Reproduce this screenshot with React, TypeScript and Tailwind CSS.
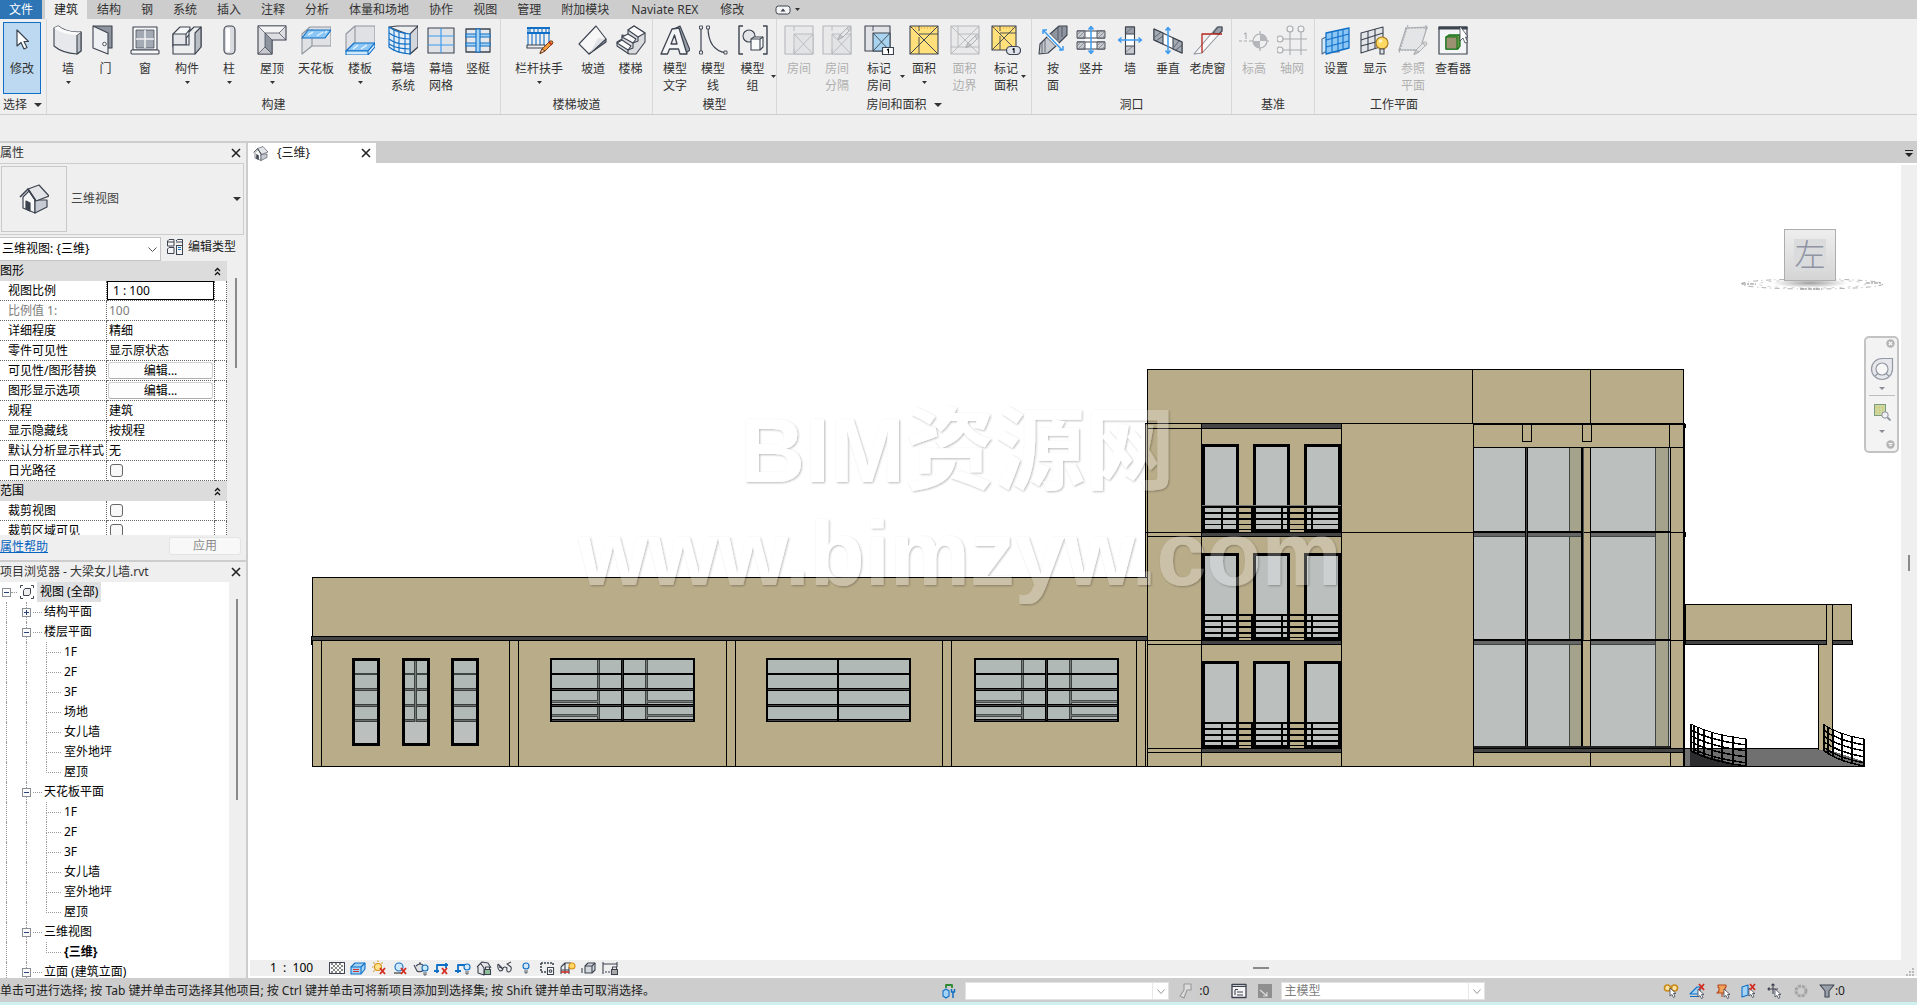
import React from "react";

const INK = "#3d4450";
const BLUE = "#0f6fc6";
const SKY = "#3d9bee";

/* ---------- icon helpers ---------- */

function Ico({ children, size = 30 }: { children: React.ReactNode; size?: number }) {
  return (
    <svg
      width={size}
      height={size}
      viewBox={size === 30 ? "0 0 30 30" : "0 0 16 16"}
      fill="none"
      stroke={INK}
      strokeWidth="1.1"
      strokeLinejoin="round"
      className="block shrink-0"
      aria-hidden
    >
      {children}
    </svg>
  );
}

function Pencil({ gray = false, x = 0, y = 0 }: { gray?: boolean; x?: number; y?: number }) {
  return (
    <g transform={`translate(${x} ${y})`} strokeWidth="0.9" stroke={gray ? "#a8abb0" : "#6d3413"}>
      <path d="M1 13L3 9L11 1Q14 0 14 3L6 11L1 13.500Z" fill={gray ? "#e6e6e6" : "#f39a3a"} />
      <path d="M1 13.500L3 9L6 11Z" fill={gray ? "#ccc" : "#f8e2bd"} />
      <path d="M10 2L13 5" stroke={gray ? "#bbb" : "#b8251b"} strokeWidth="1.600" />
    </g>
  );
}

function RoomBase({ c, fill, sq }: { c: string; fill: string; sq: string }) {
  return (
    <>
      <rect x="1" y="1" width="28" height="28" fill={fill} stroke={c} />
      <path d="M10 9H29V29H10Z" fill={sq} stroke={c} strokeWidth="0.9" />
      <path d="M10 9L29 29M29 9L10 29M10 1V6M10 24V29" stroke={c} strokeWidth="0.9" />
    </>
  );
}

function Hatch({ x, y }: { x: number; y: number }) {
  return (
    <g>
      <rect x={x} y={y} width="8" height="7" fill="#c6c9ce" stroke={INK} strokeWidth="0.9" />
      <path d={`M${x} ${y + 4}l4-4M${x + 1} ${y + 7}l7-7M${x + 5} ${y + 7}l3-3`} stroke="#777c85" strokeWidth="0.700" />
    </g>
  );
}

const icons: Record<string, React.ReactNode> = {
  cursor: <path d="M10 5V21L14 17.500L17 24L20 22.500L17 16.500H21.500Z" fill="#fff" strokeWidth="1.200" />,
  wall: (
    <>
      <path d="M1 3L5 1Q14 8 28 7V26L24 29Q9 28 1 21Z" fill="#e6e8eb" />
      <path d="M24 10L28 7V26L24 29Z" fill="#b9bdc4" />
      <path d="M1 3L5 1Q14 8 28 7L24 10Q10 10 1 3Z" fill="#fafafa" stroke="none" />
    </>
  ),
  door: (
    <>
      <path d="M2 1H21V23H17" fill="#8f959e" />
      <path d="M2 1L17 8V29L2 23Z" fill="#eef0f2" />
      <circle cx="13.500" cy="19" r="1.800" fill="#fff" strokeWidth="0.9" />
    </>
  ),
  window: (
    <>
      <rect x="3" y="2" width="24" height="23" fill="#f7f7f8" />
      <rect x="6" y="5" width="18" height="18" fill="#a4aab3" strokeWidth="0.700" />
      <path d="M15 5V23M6 14H24" stroke="#eef0f2" strokeWidth="1.600" />
      <rect x="1" y="25" width="28" height="4" rx="1" fill="#f7f7f8" />
    </>
  ),
  component: (
    <>
      <path d="M1 9L8 2H18V9L14 13V20H5L1 22Z" fill="#f5f6f7" />
      <path d="M1 9H14V20H1Z" fill="#e3e5e9" />
      <path d="M14 9L18 4M1 20V29H23L29 22V2H22L17 7V20H1" fill="#eceef0" />
      <path d="M23 29V8L29 2V22Z" fill="#b9bdc4" />
    </>
  ),
  column: (
    <>
      <rect x="10" y="1" width="11" height="28" rx="4" fill="#d9dbdf" />
      <rect x="12" y="3" width="4" height="24" rx="2" fill="#fff" stroke="none" />
    </>
  ),
  roof: (
    <>
      <path d="M1 1H29V15H15V29H1Z" fill="#dcdee2" />
      <path d="M1 1L8 8H22L29 1Z" fill="#f5f5f6" strokeWidth="0.700" />
      <path d="M8 8V22L15 29V15L8 8Z" fill="#8f959e" strokeWidth="0.700" />
      <path d="M1 29L8 22L15 29Z" fill="#c6c9ce" strokeWidth="0.700" />
      <path d="M22 8L29 15" strokeWidth="0.700" />
    </>
  ),
  ceiling: (
    <>
      <path d="M1 9L9 2H30V21H11L1 29Z" fill="#dfe1e4" stroke="#8f959e" />
      <path d="M11 4V21" stroke="#8f959e" />
      <path d="M1 13L7 5H30L24 13Z" fill="#8cc6f5" stroke={BLUE} />
      <path d="M7 10L12 7M16 11L22 7M24 8L26 6" stroke="#d9effd" strokeWidth="1.500" />
    </>
  ),
  floor: (
    <>
      <path d="M1 9L10 1H30V19L10 19L1 26Z" fill="#dfe1e4" stroke="#8f959e" />
      <path d="M10 1V19" stroke="#8f959e" />
      <path d="M1 26L9 18H30L23 26Z" fill="#8cc6f5" stroke={BLUE} />
      <path d="M1 26H23V30H1ZM23 26L30 18V22L23 30Z" fill="#cfe8fb" stroke={BLUE} />
      <path d="M8 24L13 20M16 24L22 20" stroke="#e6f5ff" strokeWidth="1.500" />
    </>
  ),
  curtainSystem: (
    <>
      <path d="M1 2L9 1H30V22L22 29Q22 29 22 10Z" fill="#eceef0" />
      <path d="M30 1L22 9V29L30 22Z" fill="#d3d6db" />
      <path d="M1 2Q9 8 22 9V29Q8 28 1 22Z" fill="#e4edf5" stroke={BLUE} strokeWidth="1.200" />
      <path d="M1 8Q9 14 22 14M1 14Q9 20 22 19M1 19Q9 24 22 24M6 5V26M11 7V28M17 8V29" stroke={BLUE} strokeWidth="1.100" />
    </>
  ),
  curtainGrid: (
    <>
      <rect x="2" y="3" width="26" height="25" fill="#e0e2e6" />
      <path d="M15 3V28M2 11H28M2 20H28" stroke={SKY} strokeWidth="1.200" />
    </>
  ),
  mullion: (
    <>
      <rect x="3" y="4" width="24" height="23" fill="#e6e8eb" strokeWidth="1.300" />
      <path d="M3 9H27V12H3ZM3 18H27V21H3Z" fill="#a5d3f5" stroke={BLUE} />
      <path d="M13 4H17V27H13Z" fill="#a5d3f5" stroke={BLUE} />
    </>
  ),
  railing: (
    <>
      <path d="M3 3H26M3 8H26" stroke={BLUE} strokeWidth="2.200" />
      <path d="M4 3V21M8 9V21M12 9V21M16 9V21M20 9V21M25 3V17M6 4V7M10 4V7M14 4V7M18 4V7M22 4V7" stroke={BLUE} />
      <rect x="3" y="20" width="18" height="3" fill="#eee" />
      <Pencil x={15} y={15} />
    </>
  ),
  ramp: (
    <>
      <path d="M1 19L18 1L28 14L11 29Z" fill="#f7f7f8" />
      <path d="M11 29L28 14V17L11 29Z" fill="#8f959e" />
      <path d="M20 13L27 14L12 28Z" fill="#dfe1e4" stroke="none" />
    </>
  ),
  stair: (
    <>
      <path d="M12 5L18 1L29 8V17L20 29L13 29L1 21V17L6 14V10L12 11Z" fill="#d9dbdf" />
      <path d="M12 5L18 1L29 8L22 12Z" fill="#fafafa" />
      <path d="M6 12L12 9L20 14L17 18ZM1 18L6 15L15 21L12 25Z" fill="#fafafa" />
      <path d="M22 12V16L17 18V23L12 25V29" />
    </>
  ),
  modelText: (
    <>
      <path d="M14 4L20 1L30 25L24 29Z" fill="#9aa0a9" />
      <path d="M1 29L12 4L19 3L27 29H20L18.500 24H9.500L7.500 29ZM11 19H17L14.500 10Z" fill="#f4f5f6" fillRule="evenodd" strokeWidth="1.300" />
    </>
  ),
  modelLine: (
    <>
      <path d="M3 2V28M10 2Q10 25 28 28" strokeWidth="1.200" />
      <g fill="#eee" strokeWidth="0.900">
        <rect x="1.500" y="1" width="3" height="3" />
        <rect x="1.500" y="26" width="3" height="3" />
        <rect x="8.500" y="1" width="3" height="3" />
        <rect x="26" y="26" width="3" height="3" />
      </g>
    </>
  ),
  modelGroup: (
    <>
      <path d="M5 1H1V29H5M25 1H29V29H25" strokeWidth="1.400" />
      <circle cx="11" cy="11" r="6" fill="#e3e5e9" />
      <path d="M13 14L16 12H25V22L22 25H13Z" fill="#fafafa" />
      <path d="M13 14H22V25M22 14L25 12" />
    </>
  ),
  room: <RoomBase c="#b4b7bb" fill="#e9e9ea" sq="#e2e3e4" />,
  roomSep: (
    <>
      <RoomBase c="#b4b7bb" fill="#e9e9ea" sq="#e2e3e4" />
      <Pencil gray x={15} y={1} />
    </>
  ),
  tagRoom: (
    <>
      <path d="M1 1H26V26H1Z" fill="#e0e2e6" />
      <path d="M9 8H26V26H9Z" fill="#a9d4ef" />
      <path d="M9 8L26 26M26 8L9 26M9 1V6" strokeWidth="0.900" />
      <rect x="18.500" y="22.500" width="11" height="7" fill="#fff" strokeWidth="1.200" />
      <path d="M23 25L24.500 24V28.500" stroke="#000" />
    </>
  ),
  area: (
    <>
      <rect x="1" y="1" width="28" height="28" fill="#ffe07a" />
      <path d="M1 1L29 29M29 1L1 29" strokeWidth="1" />
      <path d="M10 1V6M10 12V29M10 9H29" strokeWidth="0.900" />
      <path d="M3 3H27" stroke="#e59a2a" strokeDasharray="1 2" />
    </>
  ),
  areaBoundary: (
    <>
      <rect x="1" y="1" width="28" height="28" fill="#e9e9ea" stroke="#b4b7bb" />
      <path d="M1 1L29 29M29 1L1 29M8 1V22M1 22H29M8 9H29" stroke="#b4b7bb" strokeWidth="0.900" />
      <Pencil gray x={15} y={9} />
    </>
  ),
  tagArea: (
    <>
      <rect x="1" y="1" width="24" height="24" fill="#ffe07a" />
      <path d="M1 1L25 25M25 1L1 25M9 1V6M9 11V25M9 8H25" strokeWidth="0.900" />
      <path d="M3 3H23" stroke="#e59a2a" strokeDasharray="1 2" />
      <rect x="15.500" y="21.500" width="14" height="8" rx="4" fill="#dfe3ec" strokeWidth="1.200" />
      <path d="M21.500 24.500L23 23.500V28" stroke="#000" />
    </>
  ),
  byFace: (
    <>
      <path d="M2 19L9 12L18 21L10 28L1 29Z" fill="#c6c9ce" />
      <path d="M12 9L21 1H29V10L21 18Z" fill="#8f959e" />
      <path d="M9 12L12 9L21 18L18 21Z" fill="#fff" stroke="none" />
      <path d="M4 17V28M7 15V27M20 2V15M24 2V12" strokeWidth="0.700" />
      <path d="M6 6L24 25M5 9V5H9M21 25H25V21" stroke={SKY} strokeWidth="1.500" />
    </>
  ),
  shaft: (
    <>
      <rect x="9" y="6" width="12" height="18" fill="#fff" stroke="none" />
      <path d="M1 6H29M1 13H29M1 17H29M1 24H29" />
      <Hatch x={1} y={6} />
      <Hatch x={21} y={6} />
      <Hatch x={1} y={17} />
      <Hatch x={21} y={17} />
      <path d="M15 2V28M12.500 4.500L15 1.500L17.500 4.500M12.500 25.500L15 28.500L17.500 25.500" stroke={SKY} strokeWidth="1.500" />
    </>
  ),
  wallOpening: (
    <>
      <rect x="10.500" y="2" width="9" height="27" fill="#fff" />
      <rect x="10.500" y="2" width="9" height="7" fill="#9aa0a9" />
      <rect x="10.500" y="21" width="9" height="8" fill="#c6c9ce" />
      <path d="M11 27L18 21M11 8L18 2" stroke="#666b75" strokeWidth="0.700" />
      <path d="M4 15H26M6.500 12.500L3.500 15L6.500 17.500M23.500 12.500L26.500 15L23.500 17.500" stroke={SKY} strokeWidth="1.500" />
    </>
  ),
  vertical: (
    <>
      <path d="M1 4L29 17V28L1 15Z" fill="#fff" />
      <path d="M1 4L10 8V19L1 15ZM20 13L29 17V28L20 24Z" fill="#a4aab3" />
      <path d="M2 12L8 7M3 16L10 11M21 22L26 16M23 25L29 20" strokeWidth="0.700" />
      <path d="M15 3V28M12.500 5.500L15 2.500L17.500 5.500M12.500 25.500L15 28.500L17.500 25.500" stroke={SKY} strokeWidth="1.500" />
    </>
  ),
  dormer: (
    <>
      <path d="M1 29L24 2H29V6L9 28Z" fill="#fafafa" stroke="#8f959e" />
      <path d="M20 8L25 2H29V6L26 9Z" fill="#9aa0a9" />
      <path d="M9 28V9H29" stroke="#b5251b" strokeWidth="1.300" />
    </>
  ),
  level: (
    <g stroke="#a8abb0">
      <path d="M0 16H3M5 16H8M10 16H30M21 6V26" />
      <circle cx="21" cy="16" r="7" fill="#efefef" />
      <path d="M21 9A7 7 0 0 1 28 16H21ZM21 16V23A7 7 0 0 1 14 16Z" fill="#b4b6ba" stroke="none" />
      <path d="M5 9L7 8V14" />
    </g>
  ),
  gridLines: (
    <g stroke="#a8abb0">
      <path d="M13 6V30M24 6V30M6 14H30M6 25H30" />
      <g fill="#f4f4f4">
        <circle cx="13" cy="4" r="3" />
        <circle cx="24" cy="4" r="3" />
        <circle cx="3" cy="14" r="3" />
        <circle cx="3" cy="25" r="3" />
      </g>
    </g>
  ),
  setPlane: (
    <>
      <path d="M1 14L5 12H18V27H4L1 29Z" fill="#cfe8fb" stroke="#5a6e86" />
      <path d="M5 8L28 3V23L5 29Z" fill="#8cc6f5" stroke={BLUE} strokeWidth="1.300" />
      <path d="M11 7V27M17 6V26M22 5V24M5 15L28 9M5 22L28 16" stroke={BLUE} />
    </>
  ),
  showPlane: (
    <>
      <path d="M1 8L23 2V21L1 28Z" fill="#e3e5e9" />
      <path d="M8 6V26M15 4V23M1 15L23 8M1 21L23 15" />
      <circle cx="22" cy="18" r="6" fill="#ffd964" stroke="#a8791c" />
      <circle cx="20.500" cy="16" r="1.800" fill="#fff6cf" stroke="none" />
      <path d="M20 24H24V29H20Z" fill="#dfe1e4" />
    </>
  ),
  refPlane: (
    <g stroke="#a8abb0">
      <path d="M8 3L29 2L22 25H1Z" fill="#e4e5e6" />
      <path d="M10 0L1 28M0 25H22M7 3H30M28 0V6" strokeDasharray="2 1" />
      <Pencil gray x={15} y={16} />
    </g>
  ),
  viewer: (
    <>
      <rect x="1" y="2" width="28" height="27" fill="#f4f5f6" strokeWidth="1.200" />
      <path d="M1 2H29V4H1Z" fill={INK} />
      <path d="M8 12L11 10H22V21L20 24H8Z" fill="#6a9a48" stroke="#17751a" strokeWidth="1.300" />
      <path d="M8 12H19V24H8Z" fill="#9c9272" stroke="#17751a" />
      <path d="M22 1V16L25 13L27 18L29.500 17L27.500 12H30Z" fill="#fff" strokeWidth="0.800" />
    </>
  ),
};

/* ---------- ribbon ---------- */

type Tool = { icon: string; lines: string[]; w: string; arrow?: "below" | "side"; off?: boolean };
type Group = { title: string; arrow?: boolean; tools: Tool[]; pad?: string };

const groups: Group[] = [
  {
    title: "构建",
    tools: [
      { icon: "wall", lines: ["墙"], w: "w-[42px]", arrow: "below" },
      { icon: "door", lines: ["门"], w: "w-[33px]" },
      { icon: "window", lines: ["窗"], w: "w-[46px]" },
      { icon: "component", lines: ["构件"], w: "w-[38px]", arrow: "below" },
      { icon: "column", lines: ["柱"], w: "w-[46px]", arrow: "below" },
      { icon: "roof", lines: ["屋顶"], w: "w-[40px]", arrow: "below" },
      { icon: "ceiling", lines: ["天花板"], w: "w-[48px]" },
      { icon: "floor", lines: ["楼板"], w: "w-[40px]", arrow: "below" },
      { icon: "curtainSystem", lines: ["幕墙", "系统"], w: "w-[46px]" },
      { icon: "curtainGrid", lines: ["幕墙", "网格"], w: "w-[30px]" },
      { icon: "mullion", lines: ["竖梃"], w: "w-[44px]" },
    ],
  },
  {
    title: "楼梯坡道",
    tools: [
      { icon: "railing", lines: ["栏杆扶手"], w: "w-[76px]", arrow: "below" },
      { icon: "ramp", lines: ["坡道"], w: "w-[32px]" },
      { icon: "stair", lines: ["楼梯"], w: "w-[43px]" },
    ],
  },
  {
    title: "模型",
    tools: [
      { icon: "modelText", lines: ["模型", "文字"], w: "w-[44px]" },
      { icon: "modelLine", lines: ["模型", "线"], w: "w-[32px]" },
      { icon: "modelGroup", lines: ["模型", "组"], w: "w-[47px]", arrow: "side" },
    ],
  },
  {
    title: "房间和面积",
    arrow: true,
    pad: "pr-[5px]",
    tools: [
      { icon: "room", lines: ["房间"], w: "w-[44px]", off: true },
      { icon: "roomSep", lines: ["房间", "分隔"], w: "w-[32px]", off: true },
      { icon: "tagRoom", lines: ["标记", "房间"], w: "w-[52px]", arrow: "side" },
      { icon: "area", lines: ["面积"], w: "w-[38px]", arrow: "below" },
      { icon: "areaBoundary", lines: ["面积", "边界"], w: "w-[43px]", off: true },
      { icon: "tagArea", lines: ["标记", "面积"], w: "w-[40px]", arrow: "side" },
    ],
  },
  {
    title: "洞口",
    tools: [
      { icon: "byFace", lines: ["按", "面"], w: "w-[42px]" },
      { icon: "shaft", lines: ["竖井"], w: "w-[34px]" },
      { icon: "wallOpening", lines: ["墙"], w: "w-[44px]" },
      { icon: "vertical", lines: ["垂直"], w: "w-[32px]" },
      { icon: "dormer", lines: ["老虎窗"], w: "w-[47px]" },
    ],
  },
  {
    title: "基准",
    pad: "pr-[6px]",
    tools: [
      { icon: "level", lines: ["标高"], w: "w-[44px]", off: true },
      { icon: "gridLines", lines: ["轴网"], w: "w-[32px]", off: true },
    ],
  },
  {
    title: "工作平面",
    tools: [
      { icon: "setPlane", lines: ["设置"], w: "w-[42px]" },
      { icon: "showPlane", lines: ["显示"], w: "w-[36px]" },
      { icon: "refPlane", lines: ["参照", "平面"], w: "w-[40px]", off: true },
      { icon: "viewer", lines: ["查看器"], w: "w-[40px]" },
    ],
  },
];

const tabs = ["结构", "钢", "系统", "插入", "注释", "分析", "体量和场地", "协作", "视图", "管理", "附加模块", "Naviate REX", "修改"];

function Down({ big = false }: { big?: boolean }) {
  return (
    <svg width={big ? 8 : 5} height={big ? 4 : 3} viewBox="0 0 8 4" preserveAspectRatio="none" className="block shrink-0" aria-hidden>
      <path d="M0 0H8L4 4Z" fill="#333" />
    </svg>
  );
}

function ToolButton({ t }: { t: Tool }) {
  return (
    <button
      disabled={t.off}
      className={`${t.w} relative flex shrink-0 flex-col items-center pt-[6px] leading-[17px] whitespace-nowrap ${t.off ? "text-[#b0b0b0]" : "text-[#333]"}`}
    >
      <Ico>{icons[t.icon]}</Ico>
      <span className="mt-[5px]">{t.lines[0]}</span>
      {t.lines[1] && <span>{t.lines[1]}</span>}
      {t.arrow === "below" && (
        <span className="mt-1">
          <Down />
        </span>
      )}
      {t.arrow === "side" && (
        <span className="absolute right-0 top-[56px]">
          <Down />
        </span>
      )}
    </button>
  );
}

function Ribbon() {
  return (
    <header className="shrink-0">
      <nav className="flex h-[19px] items-stretch bg-[#cdcdcd] leading-[19px] text-[#333]">
        <button className="w-[42px] bg-[#2e75b6] text-white">文件</button>
        <button className="ml-[3px] w-[42px] bg-[#efefef] text-[#222]">建筑</button>
        {tabs.map((t) => (
          <button key={t} className={t.length > 6 ? "px-3 whitespace-nowrap" : "px-[10px] whitespace-nowrap"}>
            {t}
          </button>
        ))}
        <button className="ml-[21px] flex items-center gap-1" aria-label="最小化功能区">
          <svg width="16" height="10" viewBox="0 0 16 10" aria-hidden>
            <rect x="1" y="1" width="14" height="8" rx="2.500" fill="#f5f5f5" stroke={INK} />
            <path d="M5.500 6.500H10.500L8 3.500Z" fill={INK} />
          </svg>
          <Down />
        </button>
      </nav>
      <div className="flex h-[96px] border-b border-[#cdcdcd] bg-[#efefef]">
        <div className="flex w-[47px] shrink-0 flex-col border-r border-[#d8d8d8] px-[3px] pt-[3px]">
          <button className="flex h-[72px] w-[38px] flex-col items-center border border-[#0f6fc6] bg-[#bcd9f1] pt-[2px] leading-[17px] text-[#333]">
            <Ico>{icons.cursor}</Ico>
            <span className="mt-[5px]">修改</span>
          </button>
          <button className="mt-[2px] flex items-center gap-[7px] leading-[17px] whitespace-nowrap text-[#333]">
            选择 <Down big />
          </button>
        </div>
        {groups.map((g, i) => (
          <section
            key={g.title}
            className={`flex shrink-0 flex-col ${i < groups.length - 1 ? "border-r border-[#d8d8d8]" : ""}`}
          >
            <div className={`flex h-[77px] ${g.pad ?? ""}`}>
              {g.tools.map((t) => (
                <ToolButton key={t.icon} t={t} />
              ))}
            </div>
            <div className="flex items-center justify-center gap-[7px] leading-[17px] text-[#333]">
              {g.title}
              {g.arrow && <Down big />}
            </div>
          </section>
        ))}
      </div>
      <div className="h-[26px] bg-[#eeeeee]" />
    </header>
  );
}

/* ---------- left panels ---------- */

function Close() {
  return (
    <svg width="10" height="10" viewBox="0 0 10 10" stroke="#222" strokeWidth="1.600" aria-hidden>
      <path d="M1 1L9 9M9 1L1 9" />
    </svg>
  );
}

function House({ size }: { size: number }) {
  return (
    <svg width={size} height={size} viewBox="0 0 30 30" fill="none" stroke={INK} strokeWidth="1.200" strokeLinejoin="round" aria-hidden>
      <path d="M4 13L10 7L16 16V29L4 24Z" fill="#f7f7f8" />
      <path d="M16 16H28V23L16 29Z" fill="#c6cad2" />
      <path d="M9 5L20 1L30 12L17 17Z" fill="#e3e5e9" />
      <path d="M1 13L9 5L17 17" strokeWidth="1.600" />
      <path d="M7 17L11 19V27L7 25Z" fill={INK} />
    </svg>
  );
}

type Prop = { name: string; value?: string; kind?: "text" | "input" | "gray" | "button" | "check" };

const graphicsProps: Prop[] = [
  { name: "视图比例", value: "1 : 100", kind: "input" },
  { name: "比例值 1:", value: "100", kind: "gray" },
  { name: "详细程度", value: "精细" },
  { name: "零件可见性", value: "显示原状态" },
  { name: "可见性/图形替换", value: "编辑...", kind: "button" },
  { name: "图形显示选项", value: "编辑...", kind: "button" },
  { name: "规程", value: "建筑" },
  { name: "显示隐藏线", value: "按规程" },
  { name: "默认分析显示样式", value: "无" },
  { name: "日光路径", kind: "check" },
];
const extentProps: Prop[] = [
  { name: "裁剪视图", kind: "check" },
  { name: "裁剪区域可见", kind: "check" },
];

function PropSection({ title, rows }: { title: string; rows: Prop[] }) {
  return (
    <tbody>
      <tr className="h-5">
        <th colSpan={3} className="bg-[#dcdcdc] p-0 text-left font-normal">
          <div className="flex items-center justify-between pr-[6px] leading-5">
            {title}
            <svg width="7" height="9" viewBox="0 0 7 9" fill="none" stroke="#111" strokeWidth="1.300" aria-hidden>
              <path d="M1 4L3.500 1.500L6 4M1 8L3.500 5.500L6 8" />
            </svg>
          </div>
        </th>
      </tr>
      {rows.map((r) => (
        <tr key={r.name} className="h-5 leading-[19px]">
          <td className={`border-r border-b border-dotted border-[#666] p-0 pl-2 whitespace-nowrap ${r.kind === "gray" ? "text-[#7d7d7d]" : ""}`}>
            {r.kind === "check" || r.kind === "input" ? <label htmlFor={r.name}>{r.name}</label> : r.name}
          </td>
          <td className="border-r border-b border-dotted border-[#666] p-0">
            {r.kind === "input" && (
              <input id={r.name} defaultValue={r.value} className="block h-[19px] w-full border border-black bg-white pl-[5px]" />
            )}
            {r.kind === "button" && (
              <button aria-label={`${r.name} ${r.value}`} className="mx-px block h-[17px] w-[105px] rounded-[3px] border border-[#d0d0d0] border-b-[#adadad] bg-[#fdfdfd] leading-[15px]">
                {r.value}
              </button>
            )}
            {r.kind === "check" && (
              <input
                id={r.name}
                type="checkbox"
                className="ml-[3px] block h-[13px] w-[13px] appearance-none rounded-[3px] border border-[#666] bg-[#f8f8f8]"
              />
            )}
            {(!r.kind || r.kind === "text" || r.kind === "gray") && (
              <span className={`pl-[2px] ${r.kind === "gray" ? "text-[#7d7d7d]" : ""}`}>{r.value}</span>
            )}
          </td>
          <td className="border-r border-b border-dotted border-[#666] p-0" />
        </tr>
      ))}
    </tbody>
  );
}

function Properties() {
  return (
    <section className="flex h-[417px] shrink-0 flex-col">
      <div className="flex h-5 shrink-0 items-center justify-between pr-[5px] leading-5 text-[#333]">
        属性
        <button aria-label="关闭属性">
          <Close />
        </button>
      </div>
      <div className="mr-[2px] flex h-[72px] shrink-0 items-center border border-l-0 border-[#cdcdcd]">
        <div className="ml-px flex h-[66px] w-[66px] items-center justify-center border border-[#c8c8c8]">
          <House size={30} />
        </div>
        <span className="pl-1 leading-5 text-[#444]">三维视图</span>
        <button className="mr-[2px] ml-auto" aria-label="类型选择器">
          <Down big />
        </button>
      </div>
      <div className="mt-[2px] flex h-6 shrink-0">
        <div className="relative w-[161px] shrink-0">
          <select aria-label="视图选择" className="block h-6 w-full appearance-none border border-l-0 border-[#c4c4c4] bg-white pl-[2px] text-black">
            <option>三维视图: {"{三维}"}</option>
          </select>
          <svg className="absolute top-[10px] right-1" width="9" height="5" viewBox="0 0 9 5" fill="none" stroke="#555" aria-hidden>
            <path d="M0.500 0.500L4.500 4.500L8.500 0.500" />
          </svg>
        </div>
        <button className="flex items-start gap-[5px] pt-px pl-[6px] leading-[18px] whitespace-nowrap text-[#222]">
          <svg width="16" height="17" viewBox="0 0 16 17" fill="#f5f5f5" stroke={INK} aria-hidden>
            <path d="M0.500 3L2 1.500H7V8H0.500ZM9 3L10.500 1.500H15.500V8M0.500 11L2 9.500H7V15.500H0.500ZM0.500 4H7M9 4H15" />
            <rect x="9.500" y="7.500" width="6" height="9" />
            <path d="M11 9.500H14M11 11.500H14" stroke={BLUE} />
          </svg>
          编辑类型
        </button>
      </div>
      <div className="flex h-[274px] shrink-0 overflow-hidden">
        <table className="w-[227px] shrink-0 table-fixed border-separate border-spacing-0 self-start bg-white text-black">
          <colgroup>
            <col className="w-[107px]" />
            <col className="w-[108px]" />
            <col />
          </colgroup>
          <PropSection title="图形" rows={graphicsProps} />
          <PropSection title="范围" rows={extentProps} />
        </table>
        <div className="ml-2 mt-[17px] h-[90px] w-[2px] bg-[#8a8a8a]" />
      </div>
      <div className="flex h-[25px] shrink-0 items-start justify-between pr-[5px]">
        <a href="#help" className="leading-[24px] text-[#0563c1] underline">
          属性帮助
        </a>
        <button disabled className="mt-[2px] h-[18px] w-[72px] rounded-[3px] border border-[#e4e4e4] bg-[#f8f8f8] leading-[16px] text-[#8a8a8a]">
          应用
        </button>
      </div>
    </section>
  );
}

type Node = { t: string; level: 1 | 2; open?: boolean; last?: boolean; bold?: boolean };
const nodes: Node[] = [
  { t: "结构平面", level: 1, open: false },
  { t: "楼层平面", level: 1, open: true },
  { t: "1F", level: 2 },
  { t: "2F", level: 2 },
  { t: "3F", level: 2 },
  { t: "场地", level: 2 },
  { t: "女儿墙", level: 2 },
  { t: "室外地坪", level: 2 },
  { t: "屋顶", level: 2, last: true },
  { t: "天花板平面", level: 1, open: true },
  { t: "1F", level: 2 },
  { t: "2F", level: 2 },
  { t: "3F", level: 2 },
  { t: "女儿墙", level: 2 },
  { t: "室外地坪", level: 2 },
  { t: "屋顶", level: 2, last: true },
  { t: "三维视图", level: 1, open: true },
  { t: "{三维}", level: 2, last: true, bold: true },
  { t: "立面 (建筑立面)", level: 1, open: true },
];

function Toggle({ open, name }: { open?: boolean; name: string }) {
  return (
    <button aria-label={`${open ? "折叠" : "展开"} ${name}`} className="block h-[9px] w-[9px] shrink-0 bg-white">
      <svg width="9" height="9" viewBox="0 0 9 9" className="block" aria-hidden>
        <rect x="0.500" y="0.500" width="8" height="8" fill="#fafafa" stroke="#8a8f96" />
        <path d={open ? "M2 4.500H7" : "M2 4.500H7M4.500 2V7"} stroke="#2a3e7a" />
      </svg>
    </button>
  );
}

function Browser() {
  return (
    <section className="flex min-h-0 flex-1 flex-col border-t-2 border-[#cdcdcd]">
      <div className="flex h-5 shrink-0 items-center justify-between pr-[5px] leading-5 text-[#333]">
        项目浏览器 - 大梁女儿墙.rvt
        <button aria-label="关闭项目浏览器">
          <Close />
        </button>
      </div>
      <div className="flex min-h-0 flex-1 overflow-hidden">
        <ul className="w-[229px] shrink-0 overflow-hidden bg-white leading-5 text-black">
          <li className="flex h-5 items-center pl-[2px]">
            <Toggle open name="视图 (全部)" />
            <span className="w-[6px] border-b border-dotted border-[#999]" />
            <svg width="16" height="16" viewBox="0 0 16 16" fill="none" stroke={INK} aria-hidden className="ml-[2px]">
              <path d="M4 1.500H1.500V4M12 1.500H14.500V4M4 14.500H1.500V12M12 14.500H14.500V12" />
              <path d="M4.500 6.500L6 4.500H11.500V9.500L10 11.500H4.500Z" fill="#eee" />
            </svg>
            <span className="ml-[2px] h-5 bg-[#dfe0e2] px-[3px]">视图 (全部)</span>
          </li>
          {nodes.map((n, i) => (
            <li key={i} className="flex h-5">
              <span className="ml-[6px] w-5 shrink-0 border-l border-dotted border-[#999]" />
              {n.level === 1 ? (
                <>
                  <span className="relative flex w-[18px] shrink-0 items-center border-l border-dotted border-[#999]">
                    <span className="absolute -left-[5px]">
                      <Toggle open={n.open} name={n.t} />
                    </span>
                    <span className="ml-[6px] w-[9px] border-b border-dotted border-[#999]" />
                  </span>
                  <span className="whitespace-nowrap">{n.t}</span>
                </>
              ) : (
                <>
                  <span className="w-5 shrink-0 border-l border-dotted border-[#999]" />
                  <span className="flex w-[18px] shrink-0 flex-col">
                    <span className="h-[11px] w-[15px] border-b border-l border-dotted border-[#999]" />
                    {!n.last && <span className="h-[9px] border-l border-dotted border-[#999]" />}
                  </span>
                  <span className={n.bold ? "font-bold" : ""}>{n.t}</span>
                </>
              )}
            </li>
          ))}
        </ul>
        <div className="mt-[17px] ml-[7px] h-[201px] w-[2px] bg-[#8a8a8a]" />
      </div>
    </section>
  );
}

/* ---------- model elevation ---------- */

const TAN = "#b9ac89";
const GLASS = "#bbc0bf";
const GLASS2 = "#b1b9b6";
const BAND = "#444444";

function R({ x, y, x2, y2, f }: { x: number; y: number; x2: number; y2: number; f: string }) {
  return <rect x={x} y={y} width={x2 - x} height={y2 - y} fill={f} />;
}
/* outlined box: black border of thickness t around a fill */
function B({ x, y, x2, y2, f, t = 1 }: { x: number; y: number; x2: number; y2: number; f: string; t?: number }) {
  return (
    <>
      <R x={x} y={y} x2={x2} y2={y2} f="#000" />
      <R x={x + t} y={y + t} x2={x2 - t} y2={y2 - t} f={f} />
    </>
  );
}
function V({ x, y, y2, w = 1, f = "#000" }: { x: number; y: number; y2: number; w?: number; f?: string }) {
  return <R x={x} y={y} x2={x + w} y2={y2} f={f} />;
}
function H({ y, x, x2, w = 1, f = "#000" }: { x: number; y: number; x2: number; w?: number; f?: string }) {
  return <R x={x} y={y} x2={x2} y2={y + w} f={f} />;
}

function SlimWindow({ x, mid }: { x: number; mid?: boolean }) {
  return (
    <>
      <B x={x} y={658} x2={x + 28} y2={746} f={GLASS} t={3} />
      <R x={x + 3} y={661} x2={x + 25} y2={720} f={GLASS2} />
      <H x={x + 3} x2={x + 25} y={673} w={2} f="#3e4442" />
      {[688, 704, 719].map((y) => (
        <React.Fragment key={y}>
          <H x={x + 3} x2={x + 25} y={y} w={3} f="#3a3d3c" />
          <H x={x + 3} x2={x + 25} y={y + 1} f="#6b6f6e" />
        </React.Fragment>
      ))}
      {mid && (
        <>
          <V x={x + 12} y={661} y2={722} w={3} f="#3e4442" />
          <V x={x + 13} y={661} y2={722} f="#777c7a" />
        </>
      )}
    </>
  );
}

function WideWindow({ x, panes }: { x: number; panes?: boolean }) {
  const r = x + 145;
  return (
    <>
      <B x={x} y={658} x2={r} y2={722} f={GLASS2} t={2} />
      {panes && (
        <>
          {[47, 95].map((d) => (
            <React.Fragment key={d}>
              <V x={x + d} y={660} y2={720} w={3} f="#3e4442" />
              <V x={x + d + 1} y={660} y2={720} f="#777c7a" />
            </React.Fragment>
          ))}
          {[700, 714].map((y) => (
            <React.Fragment key={y}>
              <H x={x + 2} x2={x + 48} y={y} w={3} f="#4a4f4d" />
              <H x={x + 97} x2={r - 2} y={y} w={3} f="#4a4f4d" />
              <H x={x + 2} x2={x + 48} y={y + 1} f="#777c7a" />
              <H x={x + 97} x2={r - 2} y={y + 1} f="#777c7a" />
            </React.Fragment>
          ))}
        </>
      )}
      <H x={x} x2={r} y={673} w={2} />
      {[688, 704, 719].map((y) => (
        <React.Fragment key={y}>
          <H x={x} x2={r} y={y} w={3} />
          <H x={x + 2} x2={r - 2} y={y + 1} f={BAND} />
        </React.Fragment>
      ))}
      <V x={x + 71} y={658} y2={722} w={panes ? 3 : 2} />
      {panes && <V x={x + 72} y={660} y2={720} f="#333" />}
    </>
  );
}

function Balcony({ top, bottom, first }: { top: number; bottom: number; first?: boolean }) {
  const rail = bottom - 26;
  return (
    <>
      {[1202, 1253, 1304].map((x) => (
        <B key={x} x={x} y={top} x2={x + 37} y2={bottom} f={GLASS} t={3} />
      ))}
      {[0, 6, 12, 18].map((d) => (
        <H key={d} x={1202} x2={1341} y={rail + d} w={first && d === 18 ? 1 : 2} />
      ))}
      {first && <H x={1202} x2={1341} y={rail - 1} f="#777" />}
      <H x={1202} x2={1341} y={rail + 23} />
      {[1221, 1251, 1281, 1311].map((x) => (
        <V key={x} x={x} y={rail} y2={bottom} w={2} />
      ))}
    </>
  );
}

function CurvedRail({ xs, x0, x1, t0, t1, b0, b1 }: { xs: number[]; x0: number; x1: number; t0: number; t1: number; b0: number; b1: number }) {
  const curve = (a: number, b: number) => `M${x0} ${a}Q${x0 + (x1 - x0) * 0.35} ${a + (b - a) * 0.7} ${x1} ${b}`;
  const at = (x: number, a: number, b: number) => a + (b - a) * Math.sqrt((x - x0) / (x1 - x0)) ** 1.4;
  return (
    <g stroke="#000" fill="none">
      {[0, 0.22, 0.44, 0.66, 0.88, 1].map((k) => (
        <path key={k} d={curve(t0 + (b0 - t0) * k, t1 + (b1 - t1) * k)} strokeWidth={k === 0 ? 1 : 1.5} />
      ))}
      {xs.map((x) => (
        <path key={x} d={`M${x} ${at(x, t0, t1)}V${at(x, b0, b1)}`} strokeWidth="1.700" />
      ))}
    </g>
  );
}

function Elevation() {
  return (
    <g shapeRendering="crispEdges">
      {/* low wing */}
      <B x={312} y={577} x2={1148} y2={767} f={TAN} />
      {[321, 509, 518, 726, 735, 942, 951, 1136, 1145].map((x) => (
        <V key={x} x={x} y={640} y2={767} />
      ))}
      <B x={311} y={636} x2={1148} y2={641} f={BAND} />
      <V x={311} y={636} y2={645} />
      <SlimWindow x={352} />
      <SlimWindow x={402} mid />
      <SlimWindow x={451} />
      <WideWindow x={550} panes />
      <WideWindow x={766} />
      <WideWindow x={974} panes />

      {/* tower */}
      <B x={1145} y={423} x2={1152} y2={578} f={TAN} />
      <B x={1147} y={369} x2={1684} y2={767} f={TAN} />
      <V x={1472} y={369} y2={424} />
      <V x={1590} y={369} y2={424} />
      <H x={1146} x2={1685} y={423} />
      <V x={1201} y={423} y2={767} />
      <V x={1341} y={423} y2={767} />
      <V x={1473} y={423} y2={767} />
      {[428, 536, 640, 644, 748, 752].map((y) => (
        <H key={y} x={1147} x2={1201} y={y} />
      ))}
      <H x={1146} x2={1473} y={532} />
      <B x={1201} y={423} x2={1342} y2={429} f={BAND} />
      <B x={1201} y={532} x2={1342} y2={537} f={BAND} />
      <B x={1201} y={640} x2={1342} y2={645} f={BAND} />
      <B x={1201} y={748} x2={1342} y2={753} f={BAND} />
      <Balcony top={444} bottom={532} first />
      <Balcony top={553} bottom={640} />
      <Balcony top={661} bottom={748} />

      {/* glazed bay */}
      <H x={1473} x2={1685} y={423} w={2} />
      <H x={1473} x2={1685} y={447} />
      <V x={1669} y={424} y2={447} />
      <B x={1522} y={424} x2={1532} y2={442} f={TAN} />
      <B x={1582} y={424} x2={1592} y2={442} f={TAN} />
      <R x={1474} y={448} x2={1582} y2={748} f={GLASS} />
      <R x={1591} y={448} x2={1670} y2={748} f={GLASS} />
      <R x={1569} y={448} x2={1581} y2={748} f="#a5a38c" />
      <V x={1569} y={448} y2={748} f="#3e4442" />
      <R x={1655} y={448} x2={1668} y2={748} f="#a5a38c" />
      <V x={1655} y={448} y2={748} f="#3e4442" />
      <V x={1668} y={448} y2={748} f="#3e4442" />
      {[531, 639].map((y) => (
        <React.Fragment key={y}>
          <R x={1474} y={y + 2} x2={1582} y2={y + 6} f="#666" />
          <R x={1591} y={y + 2} x2={1655} y2={y + 6} f="#666" />
          <H x={1474} x2={1582} y={y} w={2} />
          <H x={1591} x2={1670} y={y} w={2} />
          <H x={1582} x2={1685} y={y + 1} />
          <H x={1474} x2={1582} y={y + 5} f="#3e4442" />
          <H x={1591} x2={1655} y={y + 5} f="#3e4442" />
        </React.Fragment>
      ))}
      <V x={1525} y={448} y2={749} w={3} />
      <V x={1526} y={448} y2={749} f="#444" />
      <V x={1581} y={448} y2={749} w={2} />
      <V x={1583} y={448} y2={640} f="#4b5553" />
      <V x={1590} y={448} y2={767} />
      <V x={1670} y={448} y2={767} />
      <H x={1474} x2={1670} y={746} w={2} f="#222" />
      <B x={1473} y={748} x2={1686} y2={753} f={BAND} />
      <V x={1684} y={424} y2={767} />
      <V x={1685} y={424} y2={428} />
      <R x={1684} y={532} x2={1686} y2={537} f="#000" />
      <V x={1683} y={448} y2={767} w={2} />

      {/* entrance canopy */}
      <R x={1685} y={748} x2={1824} y2={767} f="#707070" />
      <path d="M1824 748L1865 762V767H1824Z" fill="#707070" />
      <H x={1685} x2={1819} y={748} />
      <H x={1685} x2={1865} y={766} />
      <B x={1685} y={604} x2={1852} y2={641} f={TAN} />
      <B x={1685} y={640} x2={1853} y2={645} f={BAND} />
      <V x={1685} y={604} y2={645} />
      <R x={1819} y={645} x2={1832} y2={750} f={TAN} />
      <R x={1827} y={605} x2={1832} y2={750} f={TAN} />
      <V x={1818} y={644} y2={750} />
      <V x={1826} y={604} y2={645} />
      <V x={1832} y={604} y2={752} />
      <path d="M1690 750Q1715 760 1746 766H1690Z" fill="#2c2c2f" />
      <CurvedRail xs={[1691, 1694, 1698, 1704, 1712, 1722, 1733, 1746]} x0={1691} x1={1746} t0={724} t1={739} b0={751} b1={766} />
      <CurvedRail xs={[1824, 1828, 1833, 1842, 1852, 1864]} x0={1823} x1={1864} t0={724} t1={739} b0={750} b1={766} />
    </g>
  );
}

function Watermark() {
  return (
    <>
      <defs>
        <filter id="emboss" x="-5%" y="-20%" width="110%" height="140%">
          <feOffset in="SourceAlpha" dx="1" dy="1" result="o" />
          <feGaussianBlur in="o" stdDeviation="1" result="b" />
          <feComposite in="b" in2="SourceAlpha" operator="out" result="s" />
          <feComponentTransfer in="s" result="shadow">
            <feFuncA type="linear" slope="0.280" />
          </feComponentTransfer>
          <feComponentTransfer in="SourceGraphic" result="face">
            <feFuncA type="linear" slope="0.260" />
          </feComponentTransfer>
          <feMerge>
            <feMergeNode in="shadow" />
            <feMergeNode in="face" />
          </feMerge>
        </filter>
      </defs>
      <g filter="url(#emboss)" fill="#fff" fontSize="90" fontFamily="'Liberation Sans','Noto Sans CJK SC',sans-serif">
        <text x="740" y="482" fontWeight="700">
          BIM资源网
        </text>
        <text x="578" y="585" fontWeight="700">
          www.bimzyw.com
        </text>
      </g>
    </>
  );
}

function ViewCube() {
  return (
    <g>
      <defs>
        <radialGradient id="cubeShade">
          <stop offset="0" stopColor="#777" stopOpacity="0.700" />
          <stop offset="1" stopColor="#777" stopOpacity="0" />
        </radialGradient>
        <linearGradient id="cubeFace" x1="0" y1="0" x2="0" y2="1">
          <stop offset="0" stopColor="#eeeeee" />
          <stop offset="1" stopColor="#d4d4d4" />
        </linearGradient>
      </defs>
      <ellipse cx="1812" cy="284" rx="71" ry="5" fill="none" stroke="#b0b0b0" strokeDasharray="5 3 1 4" />
      <ellipse cx="1812" cy="284" rx="54" ry="4" fill="none" stroke="#d0d0d0" strokeDasharray="3 5" />
      <path d="M1742 284H1756M1866 283H1882M1800 289H1822" stroke="#888" strokeDasharray="4 1 2 1" />
      <ellipse cx="1810" cy="283" rx="38" ry="5" fill="url(#cubeShade)" />
      <rect x="1784.500" y="229.500" width="51" height="51" fill="url(#cubeFace)" stroke="#adadad" />
      <rect x="1794" y="239" width="32" height="32" fill="#d9dbdd" />
      <text x="1810" y="266" textAnchor="middle" fontSize="31" fill="#8f93a2" fontWeight="300" fontFamily="'Noto Sans CJK SC',sans-serif">
        左
      </text>
    </g>
  );
}

function NavBar() {
  return (
    <div className="absolute top-[173px] right-[2px] flex h-[117px] w-[35px] flex-col items-center rounded-[5px] border-2 border-[#c3c3c3] bg-[#f3f3f3]">
      <button aria-label="关闭导航栏" className="mt-px mr-[2px] self-end">
        <svg width="9" height="9" viewBox="0 0 9 9" className="block" aria-hidden>
          <circle cx="4.500" cy="4.500" r="4.200" fill="#b4b4b4" />
          <path d="M2.800 2.800L6.200 6.200M6.200 2.800L2.800 6.200" stroke="#fff" strokeWidth="1.200" />
        </svg>
      </button>
      <button aria-label="导航控制盘" className="mt-[9px]">
        <svg width="24" height="24" viewBox="0 0 24 24" fill="none" stroke="#9298a4" strokeWidth="1.200" className="block" aria-hidden>
          <path d="M12 1.500H22.500V12A10.500 10.500 0 1 1 12 1.500Z" fill="#e6e7ea" />
          <circle cx="12" cy="12" r="6" fill="#f6f6f7" />
          <path d="M5 19L8 16.500M19 19L16 16.500" />
        </svg>
      </button>
      <svg width="6" height="3" viewBox="0 0 6 3" className="mt-[6px]" aria-hidden>
        <path d="M0 0H6L3 3Z" fill="#8c8c94" />
      </svg>
      <div className="mt-[5px] h-px w-[26px] shrink-0 bg-[#bdbdbd]" />
      <button aria-label="区域放大" className="mt-[7px]">
        <svg width="18" height="18" viewBox="0 0 18 18" className="block" aria-hidden>
          <rect x="1.500" y="1.500" width="11" height="11" fill="#cbd9a0" stroke="#7e9a78" />
          <path d="M3 4.500H11M3 7H11M3 9.500H11" stroke="#e3bb5a" strokeDasharray="1 2" />
          <circle cx="12" cy="12" r="3.200" fill="#eef0f3" stroke="#8c919c" />
          <path d="M14.500 14.500L17.500 17.500" stroke="#8c919c" strokeWidth="1.800" />
        </svg>
      </button>
      <svg width="6" height="3" viewBox="0 0 6 3" className="mt-[9px]" aria-hidden>
        <path d="M0 0H6L3 3Z" fill="#8c8c94" />
      </svg>
      <button aria-label="导航栏选项" className="mt-auto mr-[2px] mb-[2px] self-end">
        <svg width="9" height="9" viewBox="0 0 9 9" className="block" aria-hidden>
          <circle cx="4.500" cy="4.500" r="4.200" fill="#b4b4b4" />
          <path d="M2.500 3.500H6.500M3 5.300H6" stroke="#fff" strokeWidth="1.100" />
        </svg>
      </button>
    </div>
  );
}

/* ---------- small tool icons ---------- */

const RedX = ({ x = 9, y = 8 }: { x?: number; y?: number }) => (
  <path d={`M${x} ${y}l5 6M${x + 5} ${y}l-5 6`} stroke="#d22a1e" strokeWidth="1.800" />
);
const Bulb = ({ x = 11, y = 6 }: { x?: number; y?: number }) => (
  <>
    <circle cx={x} cy={y} r="3" fill="#d3eafc" stroke={BLUE} />
    <path d={`M${x - 1} ${y + 4}v3h2v-3`} fill="#ddd" strokeWidth="0.800" />
  </>
);
const Ptr = ({ x = 8, y = 6 }: { x?: number; y?: number }) => (
  <path d={`M${x} ${y}v8l2-1.500l1.500 3l1.500-1l-1.500-3h2.500z`} fill="#fff" strokeWidth="0.800" />
);

const viewIcons: [string, React.ReactNode][] = [
  ["视图比例", (
    <>
      <rect x="0.500" y="2.500" width="15" height="11" fill="#fff" />
      <path d="M2 4H14M2 8H14M2 12H14" stroke="#888" strokeWidth="2" strokeDasharray="2 2" />
      <path d="M4 6H14M4 10H14" stroke="#888" strokeWidth="2" strokeDasharray="2 2" />
    </>
  )],
  ["视觉样式", (
    <>
      <path d="M1 7L5 3H15V9L11 14H1Z" fill="#a5d3f5" stroke={BLUE} />
      <path d="M1 7H11V14M11 7L15 3" stroke={BLUE} />
      <path d="M3 9.500H9M3 11.500H9" stroke="#c33" />
    </>
  )],
  ["日光路径", (
    <>
      <circle cx="7" cy="7" r="3.500" fill="#ffe28a" stroke="#d9921c" />
      <path d="M7 0.500V2M1 7H2.500M2.500 2.500L3.500 3.500M11.500 2.500L10.500 3.500M2.500 11.500L3.500 10.500" stroke="#d9921c" />
      <RedX />
    </>
  )],
  ["阴影", (
    <>
      <circle cx="7" cy="7" r="4" fill="#cfe8fb" stroke={BLUE} />
      <path d="M2 13H9" stroke="#777" strokeWidth="1.800" />
      <RedX />
    </>
  )],
  ["渲染", (
    <>
      <path d="M3 6Q7 2 11 6V10Q7 13 4 11L1 5M6 3H8" fill="#dfe1e4" />
      <Bulb x={12} y={8} />
    </>
  )],
  ["裁剪视图", (
    <>
      <path d="M3 13V5H14M0 11H5M12 3V8" stroke={BLUE} strokeWidth="1.800" />
      <RedX x={8} />
    </>
  )],
  ["显示裁剪区域", (
    <>
      <path d="M3 13V5H10M0 11H6" stroke={BLUE} strokeWidth="1.800" />
      <Bulb x={12} y={7} />
    </>
  )],
  ["锁定三维视图", (
    <>
      <path d="M1 7L6 2L12 3L15 8M2 7V13L8 15V8L5 4" fill="#e3e5e9" />
      <rect x="8.500" y="9.500" width="6" height="5" fill="#8fbf9a" />
      <path d="M9.500 9.500V7H13.500V9.500" />
    </>
  )],
  ["临时隐藏/隔离", <path d="M1 4L5 8M1 4Q0 9 3 11Q6 11 6 8Q8 6 10 8Q9 12 12 12Q15 11 14 7L10 4L14 2M6 9Q3 7 2 7" />],
  ["显示隐藏的图元", <Bulb x={8} y={6} />],
  ["临时视图属性", (
    <>
      <path d="M2 3H14V6M2 3V12H7" strokeDasharray="2 1" strokeWidth="1.600" />
      <rect x="8.500" y="7.500" width="6" height="7" fill="#fff" />
      <circle cx="11.500" cy="11" r="1.300" />
    </>
  )],
  ["分析模型", (
    <>
      <path d="M1 7L5 3H11M1 7V14M5 3V14M9 7V14M1 10H9" />
      <path d="M1 12H9" stroke="#d22a1e" strokeWidth="1.600" />
      <circle cx="12" cy="6" r="3" fill="#ffd964" stroke="#d9921c" />
    </>
  )],
  ["高亮显示位移集", (
    <>
      <path d="M4 6L7 3H14V10L11 13H4Z" fill="#d3d6db" />
      <path d="M4 6H11V13M11 6L14 3M1 8V13" />
    </>
  )],
  ["显示约束", (
    <>
      <path d="M1 2V14M15 2V7M1 4H15" />
      <path d="M3 12H8" strokeDasharray="2 1" />
      <rect x="9.500" y="9.500" width="6" height="5" fill="#aaa" />
      <path d="M10.500 9.500V7H14.500V9.500" />
    </>
  )],
];

function ViewArea() {
  return (
    <main className="flex min-w-0 flex-1 flex-col bg-white">
      <div className="flex h-5 shrink-0 items-center bg-[#cdcdcd]">
        <div className="flex h-5 w-[128px] items-center bg-white pl-[5px] leading-5 text-[#222]">
          <House size={15} />
          <button className="ml-[9px]">{"{三维}"}</button>
          <button className="mr-[5px] ml-auto" aria-label="关闭视图">
            <Close />
          </button>
        </div>
        <button className="mr-1 ml-auto" aria-label="视图列表">
          <svg width="8" height="7" viewBox="0 0 8 7" aria-hidden>
            <path d="M0 3H8L4 7Z" fill="#222" />
            <path d="M0 0.500H8" stroke="#222" />
          </svg>
        </button>
      </div>
      <div className="flex min-h-0 flex-1">
        <div className="relative min-w-0 flex-1">
          <svg viewBox="248 163 1653 797" className="absolute inset-0 h-full w-full" role="img" aria-label="三维视图">
            <Elevation />
            <Watermark />
            <ViewCube />
          </svg>
          <NavBar />
        </div>
        <div className="mt-[2px] flex w-4 shrink-0 justify-center bg-[#efefef] pt-[390px]">
          <div className="h-4 w-[2px] bg-[#8a8a8a]" />
        </div>
      </div>
      <div className="mb-[2px] ml-[2px] flex h-4 shrink-0 items-center bg-[#efefef]">
        <button className="w-[79px] pl-5 text-left leading-4 text-black">1&nbsp; :&nbsp; 100</button>
        <div className="flex gap-[5px]">
          {viewIcons.map(([n, ic]) => (
            <button key={n} aria-label={n}>
              <Ico size={16}>{ic}</Ico>
            </button>
          ))}
        </div>
        <div className="flex flex-1 pl-[635px]">
          <div className="h-[2px] w-4 bg-[#8a8a8a]" />
        </div>
        <svg width="8" height="8" viewBox="0 0 8 8" className="mr-[3px] self-end" fill="#bbb" aria-hidden>
          <path d="M6 0H8V2H6ZM3 3H5V5H3ZM6 3H8V5H6ZM0 6H2V8H0ZM3 6H5V8H3ZM6 6H8V8H6Z" />
        </svg>
      </div>
    </main>
  );
}

/* ---------- status bar ---------- */

const selectIcons: [string, React.ReactNode][] = [
  ["选择链接", (
    <>
      <g fill="#fbe3a0" stroke="#c98a1c" strokeWidth="1.600">
        <circle cx="4.500" cy="5" r="3" />
        <circle cx="11.500" cy="5" r="3" />
      </g>
      <Ptr x={7} y={5} />
    </>
  )],
  ["选择基线图元", (
    <>
      <path d="M1 11L8 4H11V11ZM1 13.500H9" fill="#a5d3f5" stroke={BLUE} />
      <Ptr x={9} y={6} />
      <RedX x={10} y={1} />
    </>
  )],
  ["选择锁定图元", (
    <>
      <path d="M3 2H11V4L10 5V8L12 10H2L4 8V5L3 4ZM7 10V14" fill="#f2a25b" stroke="#b6481b" />
      <Ptr x={9} y={6} />
    </>
  )],
  ["按面选择图元", (
    <>
      <path d="M1 4L7 2V12L1 14Z" fill="#a5d3f5" stroke={BLUE} />
      <Ptr x={8} y={5} />
      <RedX x={9} y={1} />
    </>
  )],
  ["选择时拖拽图元", (
    <>
      <path d="M6 1V11M1 6H11M4.500 2.500L6 1L7.500 2.500M2.500 4.500L1 6L2.500 7.500" />
      <Ptr x={8} y={6} />
    </>
  )],
  ["后台进程", <circle cx="8" cy="8" r="5" stroke="#a5a5a5" strokeWidth="3" strokeDasharray="3 1" />],
];

function StatusCombo({ value, label }: { value: string; label: string }) {
  return (
    <div className="relative w-[204px] shrink-0">
      <select aria-label={label} className="block h-[18px] w-full appearance-none border border-[#e2e2e2] bg-white pl-[2px] leading-4 text-[#7d7d7d]">
        <option>{value}</option>
      </select>
      <svg className="absolute top-[7px] right-[4px]" width="8" height="5" viewBox="0 0 8 5" fill="none" stroke="#999" aria-hidden>
        <path d="M0.500 0.500L4 4.500L7.500 0.500" />
      </svg>
      <span className="absolute top-px right-[16px] h-4 w-px bg-[#e8e8e8]" />
    </div>
  );
}

function StatusBar() {
  return (
    <footer className="flex h-[27px] shrink-0 items-center border-b-[3px] border-[#cdf1f1] bg-[#cdcdcd] pt-[2px] text-[#222]">
      <p className="w-[49%] shrink-0 truncate">
        单击可进行选择; 按 Tab 键并单击可选择其他项目; 按 Ctrl 键并单击可将新项目添加到选择集; 按 Shift 键并单击可取消选择。
      </p>
      <button aria-label="工作集" className="mr-2 ml-[2px]">
        <Ico size={16}>
          <path d="M2 8L5 6L8 8V13L5 15L2 13Z" fill="#a5d3f5" stroke={BLUE} />
          <path d="M5 5V2H11V5" stroke="#2f8a35" strokeWidth="1.800" />
          <path d="M12 9V15M10.500 6V9H13.500V6" stroke={BLUE} strokeWidth="1.500" />
        </Ico>
      </button>
      <StatusCombo value="" label="活动工作集" />
      <button className="ml-[9px] flex items-center gap-[5px]" aria-label="可编辑请求">
        <Ico size={16}>
          <path d="M6 1H13V7H9L6 15L2 13L6 7Z" fill="#ddd" stroke="#999" />
        </Ico>
        :0
      </button>
      <button className="ml-[22px]" aria-label="设计选项">
        <Ico size={16}>
          <rect x="1" y="1.500" width="14" height="13" fill="#f5f5f5" strokeWidth="1.300" />
          <path d="M1 3.500H15M4 6.500H7M6 9H12M6 12H12M4 7V12" />
        </Ico>
      </button>
      <button className="mr-2 ml-[10px]" aria-label="添加到集">
        <Ico size={16}>
          <rect x="1" y="1" width="14" height="14" fill="#8f8f8f" stroke="none" />
          <path d="M3 7L10 13M10 9V13H6" stroke="#ddd" />
        </Ico>
      </button>
      <StatusCombo value="主模型" label="主模型" />
      <div className="mr-[72px] ml-auto flex items-center gap-[10px]">
        {selectIcons.map(([n, ic]) => (
          <button key={n} aria-label={n}>
            <Ico size={16}>{ic}</Ico>
          </button>
        ))}
        <button className="flex items-center" aria-label="过滤器">
          <Ico size={16}>
            <path d="M1 2H15L10 8V14H6V8Z" fill="#9aa0a9" />
          </Ico>
          :0
        </button>
      </div>
    </footer>
  );
}

export default function App() {
  return (
    <div className="flex h-screen min-h-[900px] flex-col overflow-hidden bg-[#efefef] font-['Noto_Sans','Noto_Sans_CJK_SC',sans-serif] text-[12px] leading-[18px]">
      <Ribbon />
      <div className="flex min-h-0 flex-1 border-t-2 border-[#cdcdcd]">
        <aside className="flex w-[248px] shrink-0 flex-col border-r-2 border-[#cdcdcd]">
          <Properties />
          <Browser />
        </aside>
        <ViewArea />
      </div>
      <StatusBar />
    </div>
  );
}
